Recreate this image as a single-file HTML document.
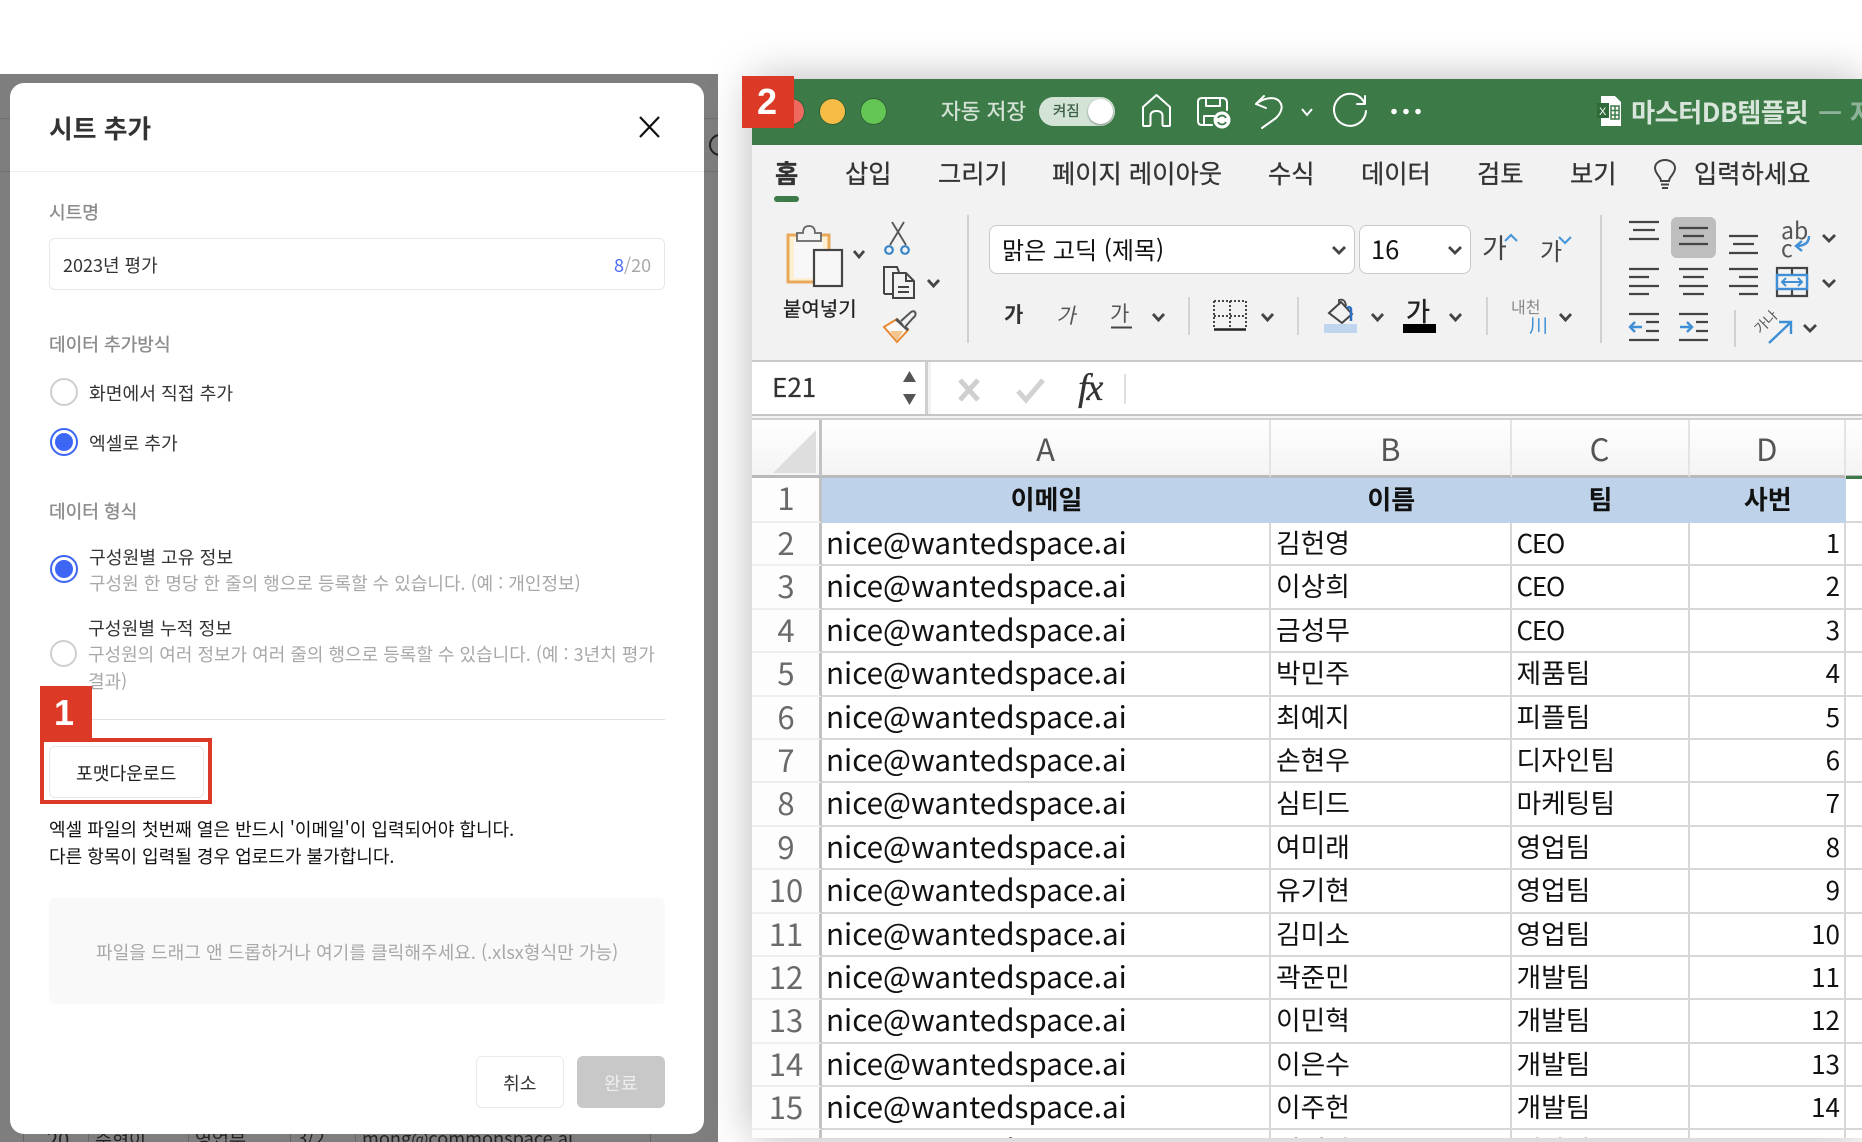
<!DOCTYPE html>
<html lang="ko"><head><meta charset="utf-8"><title>시트 추가</title>
<style>
html,body{margin:0;padding:0;background:#fff}
#p{position:relative;width:1862px;height:1142px;overflow:hidden;background:#fff;font-family:"Noto Sans CJK KR","Liberation Sans",sans-serif;filter:blur(.35px)}
.t{position:absolute;white-space:nowrap;line-height:1}
.a{position:absolute;box-sizing:border-box}
#gray{left:0;top:74px;width:718px;height:1068px;background:#7e7e7e;overflow:hidden}
#modal{left:10px;top:83px;width:694px;height:1051px;background:#fff;border-radius:14px;z-index:2}
#modal .a{margin-left:-10px;margin-top:-83px}
#modal .t{margin-left:-10px;margin-top:-83px}
.lab{font-size:18.1px;color:#8b8b8b;-webkit-text-stroke:.35px #8b8b8b}
.opt{font-size:18.2px;color:#333}
.sub{font-size:18px;color:#a8a8a8}
.r{border-radius:50%;border:2px solid #cfcfcf;background:#fff}
.ron{border-radius:50%;border:2px solid #3d66f5;background:#fff}
.ron i{position:absolute;left:3px;top:3px;right:3px;bottom:3px;border-radius:50%;background:#3d66f5}
#xl{left:752px;top:79px;width:1110px;height:1059px;background:#f2f2f2;box-shadow:0 0 42px rgba(0,0,0,.28);z-index:3;overflow:hidden}
#xl .t,#xl .a{margin-left:-752px;margin-top:-79px}
.tab{font-size:25.3px;color:#333;top:161px;-webkit-text-stroke:.3px #333}
.sep{width:2px;background:#d0d0d0}
#grid{left:752px;top:420px;width:1110px;display:grid;grid-template-columns:70px 449px 240.5px 178px 156.5px 16px;grid-template-rows:58px 45px;grid-auto-rows:43.4px;background:#fff}
#grid>div{box-sizing:border-box;border-right:2px solid #d7d7d7;border-bottom:2px solid #d7d7d7;white-space:nowrap;overflow:hidden;color:#111;font-size:26.8px;line-height:39px;padding-left:5px}
#grid>.h{background:linear-gradient(#fff,#f4f4f4);text-align:center;color:#555;font-size:31px;line-height:56px;padding:0;border-bottom:3px solid #b9b9b9;border-right:2px solid #e4e4e4}
#grid>.n{background:#fdfdfd;text-align:center;color:#6a6a6a;font-size:31px;padding:0 0 0 1px;border-right:3px solid #c2c2c2;border-bottom:2px solid #efefef;line-height:37px}
#grid>.b{background:#bed3ea;border:0;text-align:center;font-weight:700;font-size:26px;line-height:41px;padding:0}
#grid>.m{font-size:29.6px;line-height:37px;padding-left:4px}
#grid>.c{font-size:26.8px;line-height:38px}
#grid>.ceo{font-size:26px;letter-spacing:-1.2px}
#grid>.d{text-align:right;padding:0 4px 0 0;font-size:26px}
#grid>.e{background:#fff;border-right:0;padding:0}
svg{position:absolute;left:0;top:0}
</style></head><body><div id="p">

<div class="a" id="gray">
  <div class="a" style="left:0;top:44px;width:718px;height:1px;background:#6f6f6f"></div>
  <div class="a" style="left:0;top:97px;width:718px;height:1px;background:#6f6f6f"></div>
  <div class="a" style="left:709px;top:60px;width:22px;height:22px;border:2px solid #222;border-radius:50%"></div>
  <div class="t" style="left:47px;top:1055px;font-size:20px;color:#222">20</div>
  <div class="t" style="left:95px;top:1056px;font-size:18.5px;color:#222">주현이</div>
  <div class="t" style="left:195px;top:1056px;font-size:18.5px;color:#222">영업부</div>
  <div class="t" style="left:297px;top:1055px;font-size:18.5px;color:#222">3/2</div>
  <div class="t" style="left:362px;top:1055px;font-size:18.2px;color:#222">mong@commonspace.ai</div>
  <div class="a" style="left:23px;top:1050px;width:1px;height:20px;background:#666"></div>
  <div class="a" style="left:88px;top:1050px;width:1px;height:20px;background:#666"></div>
  <div class="a" style="left:188px;top:1050px;width:1px;height:20px;background:#666"></div>
  <div class="a" style="left:290px;top:1050px;width:1px;height:20px;background:#666"></div>
  <div class="a" style="left:355px;top:1050px;width:1px;height:20px;background:#666"></div>
  <div class="a" style="left:650px;top:1050px;width:1px;height:20px;background:#666"></div>
</div>

<div class="a" id="modal">
  <div class="t" style="left:49px;top:115px;font-size:25.8px;font-weight:700;color:#333">시트 추가</div>
  <div class="a" style="left:10px;top:171px;width:694px;height:1px;background:#eee"></div>
  <div class="t lab" style="left:49px;top:203px">시트명</div>
  <div class="a" style="left:49px;top:238px;width:616px;height:52px;border:1px solid #e8e8e8;border-radius:6px"></div>
  <div class="t" style="left:63px;top:256px;font-size:18px;color:#333">2023년 평가</div>
  <div class="t" style="left:614px;top:256px;font-size:18px;color:#a8a8a8"><span style="color:#4a6cf7">8</span>/20</div>
  <div class="t lab" style="left:49px;top:335px">데이터 추가방식</div>
  <div class="a r" style="left:50px;top:378px;width:28px;height:28px"></div>
  <div class="t opt" style="left:89px;top:384px">화면에서 직접 추가</div>
  <div class="a ron" style="left:50px;top:428px;width:28px;height:28px"><i style="margin:0"></i></div>
  <div class="t opt" style="left:89px;top:434px">엑셀로 추가</div>
  <div class="t lab" style="left:49px;top:502px">데이터 형식</div>
  <div class="a ron" style="left:50px;top:555px;width:28px;height:28px"><i style="margin:0"></i></div>
  <div class="t opt" style="left:89px;top:548px">구성원별 고유 정보</div>
  <div class="t sub" style="left:89px;top:574px">구성원 한 명당 한 줄의 행으로 등록할 수 있습니다. (예 : 개인정보)</div>
  <div class="a r" style="left:50px;top:640px;width:27px;height:27px"></div>
  <div class="t opt" style="left:88px;top:619px">구성원별 누적 정보</div>
  <div class="t sub" style="left:88px;top:645px">구성원의 여러 정보가 여러 줄의 행으로 등록할 수 있습니다. (예 : 3년치 평가</div>
  <div class="t sub" style="left:88px;top:672px">결과)</div>
  <div class="a" style="left:49px;top:719px;width:616px;height:1px;background:#e2e2e2"></div>
  <div class="a" style="left:49px;top:746px;width:155px;height:52px;border:1px solid #e8e8e8;border-radius:6px"></div>
  <div class="t opt" style="left:76px;top:764px;color:#222">포맷다운로드</div>
  <div class="t" style="left:49px;top:820px;font-size:18.05px;color:#111">엑셀 파일의 첫번째 열은 반드시 '이메일'이 입력되어야 합니다.</div>
  <div class="t" style="left:49px;top:847px;font-size:18.05px;color:#111">다른 항목이 입력될 경우 업로드가 불가합니다.</div>
  <div class="a" style="left:49px;top:898px;width:616px;height:106px;background:#f9f9f9;border-radius:6px"></div>
  <div class="t sub" style="left:96px;top:943px;font-size:18.1px">파일을 드래그 앤 드롭하거나 여기를 클릭해주세요. (.xlsx형식만 가능)</div>
  <div class="a" style="left:476px;top:1056px;width:88px;height:52px;border:1px solid #eaeaea;border-radius:6px;background:#fff"></div>
  <div class="t opt" style="left:503px;top:1074px">취소</div>
  <div class="a" style="left:577px;top:1056px;width:88px;height:52px;border-radius:6px;background:#c8c8c8"></div>
  <div class="t opt" style="left:604px;top:1074px;color:#eee">완료</div>
</div>
<svg width="1862" height="1142" style="z-index:2"><path d="M640 117L659 137M659 117L640 137" stroke="#111" stroke-width="2.2" fill="none"/></svg>

<div class="a" id="xl">
  <div class="a" style="left:752px;top:79px;width:1110px;height:66px;background:#3c7a47"></div>
  <div class="t" style="left:941px;top:100px;font-size:21.5px;color:#d5e3d7;-webkit-text-stroke:.3px #d5e3d7">자동 저장</div>
  <div class="a" style="left:1039px;top:97px;width:76px;height:29px;border-radius:15px;background:#d3e3d6"></div>
  <div class="t" style="left:1053px;top:104px;font-size:14.5px;color:#3c5f44;-webkit-text-stroke:.3px #3c5f44">켜짐</div>
  <div class="a" style="left:1088px;top:99px;width:25px;height:25px;border-radius:50%;background:#fff;box-shadow:0 1px 2px rgba(0,0,0,.4)"></div>
  <div class="t" style="left:1631px;top:98px;font-size:26.2px;font-weight:700;color:#d8e5da;letter-spacing:-.5px">마스터DB템플릿</div>
  <div class="t" style="left:1818px;top:98px;font-size:27px;font-weight:700;color:#8fb398">— 저</div>

  <div class="t tab" style="left:775px;font-weight:700">홈</div>
  <div class="a" style="left:774px;top:196px;width:25px;height:6px;border-radius:3px;background:#3c7a47"></div>
  <div class="t tab" style="left:845px">삽입</div>
  <div class="t tab" style="left:938px">그리기</div>
  <div class="t tab" style="left:1052px">페이지 레이아웃</div>
  <div class="t tab" style="left:1268px">수식</div>
  <div class="t tab" style="left:1361px">데이터</div>
  <div class="t tab" style="left:1477px">검토</div>
  <div class="t tab" style="left:1570px">보기</div>
  <div class="t tab" style="left:1694px">입력하세요</div>

  <div class="t" style="left:783px;top:298px;font-size:20px;color:#222;-webkit-text-stroke:.25px #222">붙여넣기</div>
  <div class="a sep" style="left:967px;top:215px;height:128px"></div>
  <div class="a" style="left:989px;top:225px;width:366px;height:49px;background:#fff;border:1.5px solid #c9c9c9;border-radius:8px"></div>
  <div class="t" style="left:1002px;top:237px;font-size:24px;color:#111">맑은 고딕 (제목)</div>
  <div class="a" style="left:1359px;top:225px;width:112px;height:49px;background:#fff;border:1.5px solid #c9c9c9;border-radius:8px"></div>
  <div class="t" style="left:1371px;top:236px;font-size:25.5px;color:#111">16</div>
  <div class="t" style="left:1482px;top:233px;font-size:27px;color:#444">가</div>
  <div class="t" style="left:1540px;top:238px;font-size:24px;color:#444">가</div>
  <div class="t" style="left:1004px;top:304px;font-size:21px;font-weight:700;color:#333">가</div>
  <div class="t" style="left:1058px;top:305px;font-size:21px;color:#555;transform:skewX(-12deg)">가</div>
  <div class="t" style="left:1110px;top:303px;font-size:21px;color:#555">가</div>
  <div class="t" style="left:1406px;top:298px;font-size:26px;color:#222;-webkit-text-stroke:.5px #222">가</div>
  <div class="t" style="left:1511px;top:298px;font-size:16px;color:#888">내천</div>
  <div class="t" style="left:1529px;top:315px;font-size:19px;color:#3f8fd6">川</div>
  <div class="t" style="left:1781px;top:218px;font-size:23px;color:#555">ab</div>
  <div class="t" style="left:1781px;top:236px;font-size:23px;color:#555">c</div>
  <div class="t" style="left:1753px;top:315px;font-size:14px;color:#555;transform:rotate(-45deg)">가나</div>

  <div class="a" style="left:752px;top:360px;width:1110px;height:2px;background:#c9c9c9"></div>
  <div class="a" style="left:752px;top:362px;width:176px;height:52px;background:#fff;border-right:3px solid #cfcfcf"></div>
  <div class="a" style="left:931px;top:362px;width:931px;height:52px;background:#fff"></div>
  <div class="t" style="left:772px;top:374px;font-size:26px;color:#333;-webkit-text-stroke:.25px #333">E21</div>
  <div class="t" style="left:1078px;top:369px;font-size:38px;color:#333;font-family:'Liberation Serif',serif;font-style:italic;letter-spacing:-2px;-webkit-text-stroke:.3px #333">fx</div>
  <div class="a" style="left:752px;top:414px;width:1110px;height:6px;background:#f3f3f3;border-top:2px solid #c6c6c6;border-bottom:2px solid #cfcfcf"></div>

  <div class="a" id="grid">
    <div class="h" style="border-right:3px solid #c2c2c2"></div><div class="h">A</div><div class="h">B</div><div class="h">C</div><div class="h">D</div><div class="h" style="border-right:0"></div>
    <div class="n">1</div><div class="b">이메일</div><div class="b">이름</div><div class="b">팀</div><div class="b">사번</div><div class="e"></div>
    <div class="n">2</div><div class="m">nice@wantedspace.ai</div><div class="c">김헌영</div><div class="ceo">CEO</div><div class="d">1</div><div class="e"></div>
    <div class="n">3</div><div class="m">nice@wantedspace.ai</div><div class="c">이상희</div><div class="ceo">CEO</div><div class="d">2</div><div class="e"></div>
    <div class="n">4</div><div class="m">nice@wantedspace.ai</div><div class="c">금성무</div><div class="ceo">CEO</div><div class="d">3</div><div class="e"></div>
    <div class="n">5</div><div class="m">nice@wantedspace.ai</div><div class="c">박민주</div><div class="c">제품팀</div><div class="d">4</div><div class="e"></div>
    <div class="n">6</div><div class="m">nice@wantedspace.ai</div><div class="c">최예지</div><div class="c">피플팀</div><div class="d">5</div><div class="e"></div>
    <div class="n">7</div><div class="m">nice@wantedspace.ai</div><div class="c">손현우</div><div class="c">디자인팀</div><div class="d">6</div><div class="e"></div>
    <div class="n">8</div><div class="m">nice@wantedspace.ai</div><div class="c">심티드</div><div class="c">마케팅팀</div><div class="d">7</div><div class="e"></div>
    <div class="n">9</div><div class="m">nice@wantedspace.ai</div><div class="c">여미래</div><div class="c">영업팀</div><div class="d">8</div><div class="e"></div>
    <div class="n">10</div><div class="m">nice@wantedspace.ai</div><div class="c">유기현</div><div class="c">영업팀</div><div class="d">9</div><div class="e"></div>
    <div class="n">11</div><div class="m">nice@wantedspace.ai</div><div class="c">김미소</div><div class="c">영업팀</div><div class="d">10</div><div class="e"></div>
    <div class="n">12</div><div class="m">nice@wantedspace.ai</div><div class="c">곽준민</div><div class="c">개발팀</div><div class="d">11</div><div class="e"></div>
    <div class="n">13</div><div class="m">nice@wantedspace.ai</div><div class="c">이민혁</div><div class="c">개발팀</div><div class="d">12</div><div class="e"></div>
    <div class="n">14</div><div class="m">nice@wantedspace.ai</div><div class="c">이은수</div><div class="c">개발팀</div><div class="d">13</div><div class="e"></div>
    <div class="n">15</div><div class="m">nice@wantedspace.ai</div><div class="c">이주헌</div><div class="c">개발팀</div><div class="d">14</div><div class="e"></div>
    <div class="n">16</div><div class="m">nice@wantedspace.ai</div><div class="c">이재원</div><div class="c">개발팀</div><div class="d">15</div><div class="e"></div>
  </div>

  <svg width="1862" height="1142" style="margin:-79px 0 0 -752px" fill="none">
    <!-- traffic lights -->
    <circle cx="791.5" cy="111.5" r="13" fill="#ee6a5f" stroke="#2f6239" stroke-width="1"/>
    <circle cx="832.5" cy="111.5" r="13" fill="#f6bc45" stroke="#2f6239" stroke-width="1"/>
    <circle cx="873.5" cy="111.5" r="13" fill="#62c554" stroke="#2f6239" stroke-width="1"/>
    <g stroke="#fff" stroke-width="2" stroke-linecap="round" stroke-linejoin="round">
      <!-- home -->
      <path d="M1143 125V107L1156.500 95L1170 107V125Q1170 126 1169 126H1164Q1162.500 126 1162.500 124V116Q1162.500 111 1156.500 111Q1150.500 111 1150.500 116V124Q1150.500 126 1149 126H1144Q1143 126 1143 125Z"/>
      <!-- save -->
      <path d="M1212 125H1202Q1198 125 1198 121V102Q1198 98 1202 98H1222Q1227 98 1227 103V110"/>
      <path d="M1206 98V106H1220V98M1204 125V116H1214"/>
      <!-- undo -->
      <path d="M1264 96L1256 104L1266 108"/>
      <path d="M1256 104C1262 99 1272 96 1278 100C1284 105 1282 112 1276 118L1262 128"/>
      <!-- redo -->
      <path d="M1364 102A16 16 0 1 0 1366 111"/>
      <path d="M1357 104H1365V96"/>
    </g>
    <circle cx="1222" cy="120" r="8.500" fill="#fff"/>
    <path d="M1218 118A4.500 4.500 0 0 1 1226 118M1226 122A4.500 4.500 0 0 1 1218 122" stroke="#3c7a47" stroke-width="1.800"/>
    <path d="M1302 109L1307 115L1312 109" stroke="#fff" stroke-width="2"/>
    <circle cx="1394" cy="111.500" r="2.800" fill="#fff"/><circle cx="1406" cy="111.500" r="2.800" fill="#fff"/><circle cx="1418" cy="111.500" r="2.800" fill="#fff"/>
    <!-- excel doc -->
    <path d="M1601 96H1615L1621 102V126H1601Z" fill="#fff"/>
    <rect x="1597" y="103" width="12" height="15" fill="#2f6b3a"/>
    <text x="1599" y="115" font-size="11" fill="#fff" font-family="Liberation Sans">X</text>
    <path d="M1611 106H1619V119H1611ZM1611 110.500H1619M1611 115H1619M1615 106V119" stroke="#3c7a47" stroke-width="1.500"/>
    <!-- bulb -->
    <path d="M1660 178C1658 175 1655 172 1655 168C1655 163 1660 160 1665 160C1670 160 1675 163 1675 168C1675 172 1672 175 1670 178C1669.500 179 1669 180 1669 181H1661C1661 180 1660.500 179 1660 178Z" stroke="#444" stroke-width="2"/>
    <path d="M1661 184.500H1669M1662 188H1668" stroke="#444" stroke-width="2"/>
    <!-- clipboard -->
    <rect x="788" y="235" width="41" height="47" fill="#fdf0d2" stroke="#e9a95b" stroke-width="3"/>
    <rect x="794" y="240" width="29" height="38" fill="#f8f8f8"/>
    <path d="M797 241V233H803Q803 226 809 226Q815 226 815 233H821V241Z" fill="#f2f2f2" stroke="#666" stroke-width="1.800"/>
    <rect x="814" y="250" width="28" height="36" fill="#f7f7f7" stroke="#444" stroke-width="2.200"/>
    <!-- scissors -->
    <path d="M892 222L906 245M904 222L890 245" stroke="#555" stroke-width="1.800"/>
    <circle cx="889" cy="250" r="3.800" stroke="#3a85c9" stroke-width="2.200"/><circle cx="905" cy="250" r="3.800" stroke="#3a85c9" stroke-width="2.200"/>
    <!-- copy -->
    <path d="M884 294V267H897L899 272M884 294H893" stroke="#444" stroke-width="2"/>
    <path d="M893 273H906L914 281V298H893ZM906 273V281H914M898 287H909M898 292H909" stroke="#444" stroke-width="2" fill="#f2f2f2"/>
    <!-- brush -->
    <path d="M884 327L897 319L908 330L897 342Z" fill="#fbfbfb" stroke="#e58a34" stroke-width="2"/>
    <path d="M890 331L903 331L897 341Z" fill="#f3c58d"/>
    <path d="M896 319L908 330" stroke="#555" stroke-width="3"/>
    <path d="M901 321L911 312Q914 310 915.500 313Q916 316 913 318L905 327" fill="#f2f2f2" stroke="#555" stroke-width="2"/>
    <!-- font group -->
    <path d="M1505 241L1511 235L1517 241" stroke="#4a97da" stroke-width="2.200"/>
    <path d="M1559 237L1565 243L1571 237" stroke="#4a97da" stroke-width="2.200"/>
    <path d="M1111 327.500H1132" stroke="#444" stroke-width="2"/>
    <path d="M1189 297V335M1298 297V335M1487 297V335" stroke="#d0d0d0" stroke-width="1.800"/>
    <!-- borders -->
    <path d="M1214 301H1246M1214 316H1246M1214 301V328M1246 301V328M1230 301V328" stroke="#444" stroke-width="2" stroke-dasharray="2 2"/>
    <path d="M1214 329.500H1246" stroke="#222" stroke-width="2.500"/>
    <!-- fill -->
    <path d="M1329 313L1341 302L1352 314L1342 323Z" stroke="#444" stroke-width="2"/>
    <path d="M1339 305V300Q1345 298 1346 306" stroke="#444" stroke-width="1.800"/>
    <path d="M1351 321V309Q1350 306 1347 308" stroke="#2a6fc0" stroke-width="2.500"/>
    <rect x="1324" y="324" width="33" height="9" fill="#c0d6ee"/>
    <rect x="1403" y="324" width="33" height="9" fill="#000"/>
    <!-- align -->
    <g transform="translate(-1 0)">
    <rect x="1672" y="217" width="45" height="41" rx="6" fill="#bebebe"/>
    <g stroke="#444" stroke-width="2.200">
      <path d="M1630 222H1660M1634 230H1656M1630 239H1660"/>
      <path d="M1680 228H1709M1684 236H1705M1680 244H1709"/>
      <path d="M1730 236H1759M1734 244H1755M1730 253H1759"/>
      <path d="M1630 269H1660M1630 277H1650M1630 286H1660M1630 294H1650"/>
      <path d="M1680 269H1709M1684 277H1705M1680 286H1709M1684 294H1705"/>
      <path d="M1730 269H1759M1740 277H1759M1730 286H1759M1740 294H1759"/>
      <path d="M1630 314H1660M1647 322H1660M1647 331H1660M1630 340H1660"/>
      <path d="M1680 314H1709M1697 322H1709M1697 331H1709M1680 340H1709"/>
      <path d="M1778 268H1808V296H1778Z"/>
      <path d="M1793 268V276M1793 288V296"/>
    </g>
    <rect x="1778" y="275" width="30" height="14" stroke="#3f8fd6" stroke-width="2.400" fill="#f2f2f2"/>
    <path d="M1783 282H1803M1787 278L1783 282L1787 286M1799 278L1803 282L1799 286" stroke="#3f8fd6" stroke-width="2"/>
    <path d="M1631 327H1643M1636 322L1631 327L1636 332" stroke="#3f8fd6" stroke-width="2.400"/>
    <path d="M1681 327H1693M1688 322L1693 327L1688 332" stroke="#3f8fd6" stroke-width="2.400"/>
    </g>
    <path d="M1809 236Q1809 246 1796 246M1802 241L1796 246L1802 251" stroke="#3f8fd6" stroke-width="2.400"/>
    <path d="M1601 215V343" stroke="#d0d0d0" stroke-width="2"/>
    <path d="M1735 310V347" stroke="#d0d0d0" stroke-width="2"/>
    <path d="M1769 343L1790 323M1779 322H1791V334" stroke="#3f8fd6" stroke-width="2.400"/>
    <!-- chevrons -->
    <g stroke="#444" stroke-width="2.800">
      <path d="M854 251L859 257L864 251M928 280L933.500 286L939 280M1153 314L1158.500 320L1164 314M1262 314L1267.500 320L1273 314M1372 314L1377.500 320L1383 314M1450 314L1455.500 320L1461 314M1560 314L1565.500 320L1571 314"/>
      <path d="M1333 247L1339 253L1345 247M1449 247L1455 253L1461 247"/>
      <path d="M1823 235L1829 241L1835 235M1823 280L1829 286L1835 280M1804 325L1810 331L1816 325"/>
    </g>
    <!-- name box steppers -->
    <path d="M903 382L909.500 371L916 382Z" fill="#555"/>
    <path d="M903 394L909.500 405L916 394Z" fill="#555"/>
    <path d="M960 380L978 400M978 380L960 400" stroke="#cfcfcf" stroke-width="5"/>
    <path d="M1018 391L1026 400L1043 380" stroke="#d2d2d2" stroke-width="5"/>
    <path d="M1125 374V404" stroke="#e0e0e0" stroke-width="2"/>
    <!-- corner triangle -->
    <path d="M816 430V473H773Z" fill="#dedede"/>
    <rect x="1846" y="476" width="16" height="3" fill="#3c7a47"/>
  </svg>
</div>

<!-- annotations -->
<div class="a" style="left:40px;top:738px;width:172px;height:66px;border:4px solid #dc3a26;z-index:5"></div>
<div class="a" style="left:40px;top:686px;width:52px;height:56px;background:#dc3a26;z-index:5"></div>
<div class="t" style="left:54px;top:695px;font-size:36px;font-weight:700;color:#fff;z-index:6;font-family:'Liberation Sans',sans-serif">1</div>
<div class="a" style="left:742px;top:76px;width:52px;height:52px;background:#dc3a26;z-index:5"></div>
<div class="t" style="left:757px;top:84px;font-size:36px;font-weight:700;color:#fff;z-index:6;font-family:'Liberation Sans',sans-serif">2</div>
</div></body></html>
